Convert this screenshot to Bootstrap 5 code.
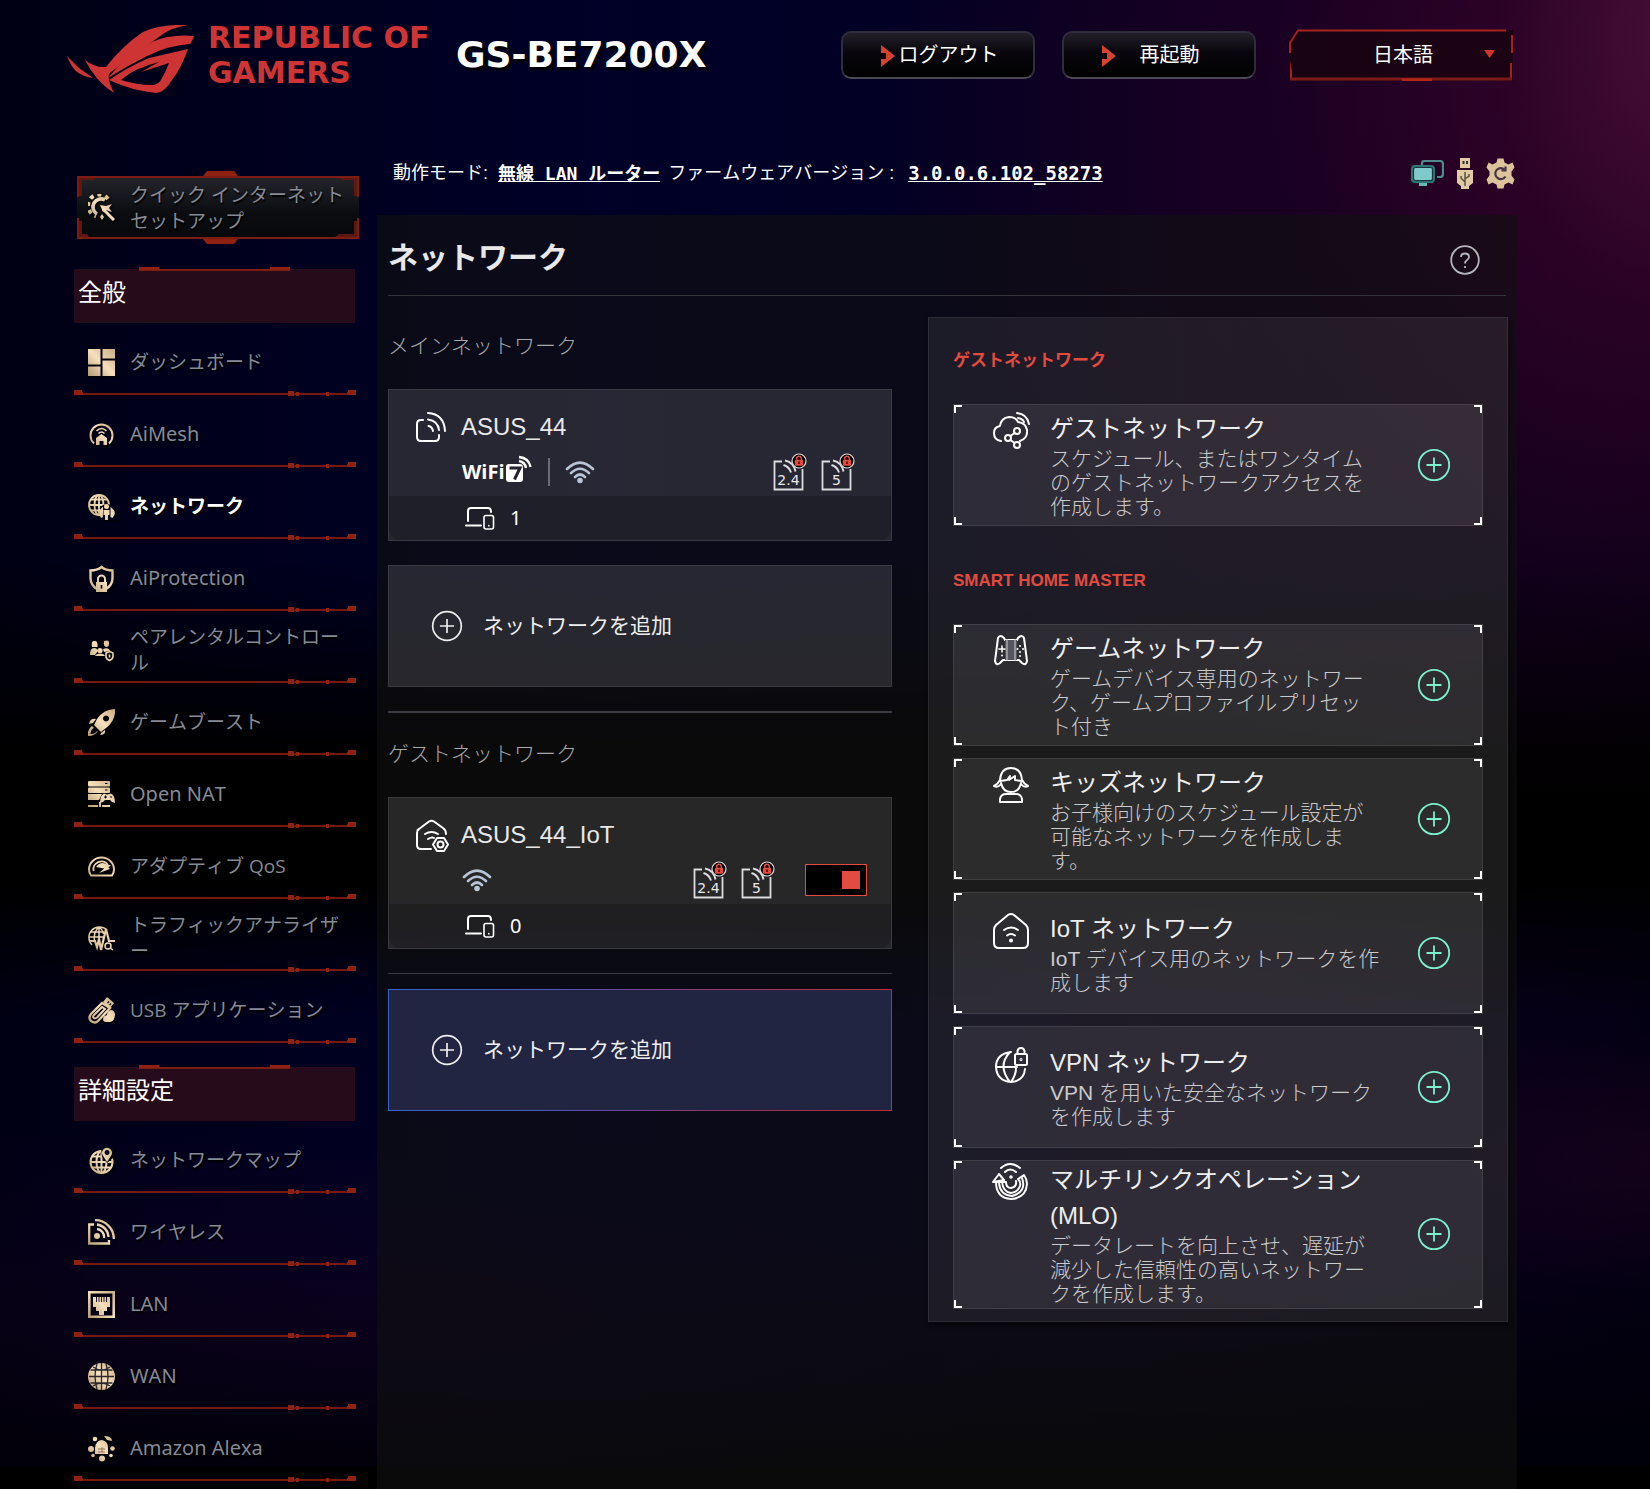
<!DOCTYPE html>
<html lang="ja" data-bs-theme="dark">
<head>
<meta charset="utf-8">
<meta name="viewport" content="width=device-width, initial-scale=1">
<title>GS-BE7200X - ネットワーク</title>
<link rel="stylesheet" href="https://cdn.jsdelivr.net/npm/bootstrap@5.3.0/dist/css/bootstrap.min.css">
<style>
:root{--rog:#cf3434;--accent:#e34a40;--side-line:#8f2113}
body{
  font-family:"Liberation Sans","Noto Sans CJK JP",sans-serif;color:#fff;min-height:100vh;overflow-x:hidden;font-kerning:none;text-spacing-trim:space-all;
  background:
    linear-gradient(180deg,transparent 1466px,#000 1467px),
    radial-gradient(ellipse 420px 620px at 102% 2%,rgba(76,16,58,.9),rgba(56,4,44,.5) 45%,transparent 100%),
    radial-gradient(ellipse 700px 700px at 96% 8%,rgba(46,0,40,.7),transparent 100%),
    radial-gradient(ellipse 360px 130px at 100% 78%,rgba(44,4,36,.4),transparent 100%),
    radial-gradient(ellipse 900px 200px at 22% 88%,rgba(20,2,30,.5),transparent 100%),
    linear-gradient(180deg,transparent 560px,#000 760px,#000 880px,transparent 1020px,transparent 1250px,#000008 1450px),
    linear-gradient(90deg,#000014 0,#00001e 250px,#000028 600px,#020024 900px,#0c0020 1200px,#040014 1650px);
}
.page-shell{padding:0 133px 0 67px}
.top-bar{height:110px;padding-right:4px}
.brand-name{font:700 30px/35px "DejaVu Sans",sans-serif;color:var(--rog);margin-left:14px;width:240px}
.model-name{font:700 36px/42px "DejaVu Sans",sans-serif;text-shadow:3px 3px 2px #000;margin-left:8px}
.top-btn{width:194px;height:48px;border:2px solid #2f2d3c;border-bottom-color:#4b4856;border-radius:10px;background:linear-gradient(#221f2a,#08060c 45%,#000);color:#fff;font-size:20px;padding:0 0 0 21px;position:relative}
.top-btn + .top-btn{margin-left:27px}
.top-btn:hover{color:#fff;border-color:#777}
.top-btn svg{position:absolute;left:37px;top:11px}
.lang-box{width:224px;height:52px;position:relative;margin-left:33px}
.lang-box svg{position:absolute;inset:0;pointer-events:none}
.lang-box select{appearance:none;width:100%;height:100%;border:0;background:#18040fcc;color:#fff;font-size:20px;text-align:center;padding-left:4px;clip-path:polygon(9px 1px,100% 1px,100% 100%,1px 100%,1px 14px)}
.side-col{width:304px;flex:none;padding:66px 0 0 7px;font-family:"Open Sans","Noto Sans CJK JP",sans-serif}
.quick-setup{margin:0 0 30px 3px;width:282px;height:63px;position:relative;background:linear-gradient(#25252b,#0a0c10 60%,#06080c)}
.quick-setup .frame{position:absolute;left:0;top:-5px;pointer-events:none}
.side-link{display:flex;align-items:center;color:#868a94;font-size:19px;line-height:26px;text-decoration:none;text-shadow:1px 2px 1px #000;gap:15px;word-break:break-all}
.side-link:hover,.side-link.active{color:#fff}
.side-link.active{font-weight:600}
.side-link.latin{font-size:20px;font-family:"Noto Sans",sans-serif}
.side-link svg{flex:none;filter:drop-shadow(1px 1px 1px #000)}
.quick-setup .side-link{height:63px;padding:0 4px 0 11px}
.side-head{width:281px;height:54px;background:#260b1a;font:24px/43px "Noto Sans CJK JP",sans-serif;padding-left:4px;margin:0;position:relative}
.side-head::before{content:"";position:absolute;left:65px;width:151px;top:-2px;height:4px;background:linear-gradient(var(--side-line),var(--side-line)) 0 0/20px 3px no-repeat,linear-gradient(var(--side-line),var(--side-line)) 100% 0/20px 3px no-repeat,linear-gradient(#7c1c12,#7c1c12) 0 2px/100% 2px no-repeat}
.side-item{width:282px;height:72px;position:relative;padding:8px 8px 0 14px}
.side-item .side-link{height:62px}
.side-item::after{content:"";position:absolute;left:0;bottom:-1px;width:100%;height:6px;
  background:
  linear-gradient(70deg,#8f2113 9px,transparent 9px) 0 0/12px 5px no-repeat,
  linear-gradient(-70deg,#8f2113 9px,transparent 9px) 100% 0/12px 5px no-repeat,
  linear-gradient(#8f2113,#8f2113) 214px 1px/6px 5px no-repeat,
  linear-gradient(#8f2113,#8f2113) 222px 2px/3px 4px no-repeat,
  linear-gradient(#8f2113,#8f2113) 252px 2px/3px 4px no-repeat,
  linear-gradient(#761710,#761710) 0 3px/100% 2px no-repeat}
.status-row{height:105px;padding:21px 2px 0 16px;font-size:18px}
.status-row a{color:#fff;font-weight:700;font-family:"DejaVu Sans Mono","Noto Sans CJK JP",monospace}
.status-row .op-mode{margin-left:10px}
.status-row .fw-ver{font-size:19px;margin-left:14px}
.status-icons{gap:12px}
.main-col{margin-left:6px}
.main-panel{background:rgba(17,17,17,.6);min-height:1274px;padding:0 11px 24px}
.panel-title{height:81px;border-bottom:1px solid #34333c;padding:5px 26px 0 0;margin:0 0 21px}
.panel-title h1{font-size:30px;font-weight:700;margin:0;color:#e8e8e8}
.net-columns{display:grid;grid-template-columns:504fr 580fr;gap:36px;margin-right:-2px;align-items:start}
.right-col{background:rgba(255,255,255,.07);border:1px solid rgba(255,255,255,.07);box-shadow:1px 4px 5px rgba(0,0,0,.45);padding:0 24px 12px}
.group-label{font-size:21px;font-weight:300;line-height:32px;color:#a8a8aa;margin:0;padding:25px 0 27px}
.group-label:first-child{padding-top:13px}
.net-card{background:rgba(255,255,255,.12);border:1px solid rgba(255,255,255,.09);border-radius:0;height:152px;color:#e8e8e8}
.net-name{font-size:24px;line-height:30px;padding:17px 24px 0 26px;gap:14px;height:57px}
.net-radio{height:49px;padding:0 24px 0 73px}
.net-foot{height:44px;background:rgba(0,0,0,.2);border-radius:0 0 10px 10px;font:20px/42px "Noto Sans",sans-serif;padding-left:76px;gap:15px;color:#fff}
.wifi-word{font:700 20px/28px "Open Sans",sans-serif;color:#fff;width:44px}
.band-set{gap:14px}
.v-sep{width:2px;height:28px;background:#6b6b75;margin:0 15px}
.add-btn{height:122px;width:100%;border:1px solid rgba(255,255,255,.09);border-radius:0;background:rgba(255,255,255,.12);color:#eee;font-size:21px;padding:0 0 0 42px;gap:20px}
.add-btn:hover{color:#fff;background:rgba(255,255,255,.18)}
.add-btn.chosen{background:#212542;border-image:linear-gradient(90deg,#3d61cc,#4a5abe 30%,#94376c 65%,#b83038) 1}
.rule{border:0;border-top:1px solid #3c3c44;opacity:1;margin:24px 0 15px}
.rule-thick{border-top-width:2px;margin-bottom:0}
.sq-switch{appearance:none;width:62px;height:32px;margin:0 0 0 30px;background:#000;border:1px solid var(--accent);position:relative}
.sq-switch::after{content:"";position:absolute;top:6px;left:6px;width:18px;height:18px;background:#666}
.sq-switch:checked::after{left:auto;right:6px;background:var(--accent)}
.kind-label{font-size:17px;font-weight:700;line-height:86px;color:var(--accent);margin:0}
.kind-btn{width:100%;min-height:122px;margin-bottom:12px;border:1px solid rgba(255,255,255,.09);border-radius:0;padding:1px 31px 2px 38px;color:#eee;
  background:linear-gradient(#fff,#fff) 0 0/8px 2px no-repeat,linear-gradient(#fff,#fff) 0 0/2px 8px no-repeat,
  linear-gradient(#fff,#fff) 100% 0/8px 2px no-repeat,linear-gradient(#fff,#fff) 100% 0/2px 8px no-repeat,
  linear-gradient(#fff,#fff) 0 100%/8px 2px no-repeat,linear-gradient(#fff,#fff) 0 100%/2px 8px no-repeat,
  linear-gradient(#fff,#fff) 100% 100%/8px 2px no-repeat,linear-gradient(#fff,#fff) 100% 100%/2px 8px no-repeat,rgba(255,255,255,.08)}
.kind-btn:last-child{margin-bottom:0}
.kind-btn:hover{color:#fff;border-color:#888}
.kind-icon{align-self:flex-start;margin-top:6px}
.kind-icon.low{margin-top:18px}
.kind-text{width:332px;margin-left:20px}
.kind-title{font-size:24px;line-height:36px;display:block}
.kind-desc{font-size:21px;line-height:24px;font-weight:300;color:#cac9cc;display:block}
.kind-plus{color:#7df0cd;margin-left:auto}
.ln{fill:none;stroke:#fff;stroke-width:2;stroke-linecap:round;stroke-linejoin:round}
.gs{fill:none;stroke:url(#gold);stroke-width:2}
.gf{fill:url(#gold)}
.cut{fill:#05061a}
</style>
<script src="https://cdn.jsdelivr.net/npm/bootstrap@5.3.0/dist/js/bootstrap.bundle.min.js"></script>
</head>
<body>
<svg width="0" height="0" class="position-absolute" aria-hidden="true">
  <defs>
    <linearGradient id="gold" gradientUnits="userSpaceOnUse" x1="0" y1="27" x2="27" y2="0"><stop offset="0" stop-color="#b39a72"/><stop offset=".5" stop-color="#f6dfbc"/><stop offset="1" stop-color="#c9ad80"/></linearGradient>
    <symbol id="plus" viewBox="0 0 34 34"><circle cx="17" cy="17" r="15.200" fill="none" stroke="currentColor" stroke-width="1.800"/><path d="M17 9.500v15M9.500 17h15" stroke="currentColor" stroke-width="1.800"/></symbol>
    <symbol id="wifi" viewBox="0 0 30 24"><g fill="none" stroke="#b9c4d6" stroke-width="2.600" stroke-linecap="round"><path d="M2 9Q15-4 28 9"/><path d="M6 13Q15 4.500 24 13"/><path d="M10 17Q15 12 20 17"/></g><circle cx="15" cy="20.500" r="2.800" fill="#b9c4d6"/></symbol>
    <symbol id="band" viewBox="0 0 34 38"><path d="M9 8.500H1.500V36.500H29.500V16" fill="none" stroke="#dcdce0" stroke-width="1.800"/><path d="M12 7.500q9 2 10.500 11M10.500 12q6 2 7.500 7.500" fill="none" stroke="#dcdce0" stroke-width="1.900"/><circle cx="26" cy="8" r="7" fill="#000" stroke="#ddd" stroke-width="1.200"/><path d="M23.700 7V5.500a2.300 2.300 0 0 1 4.600 0V7" fill="none" stroke="#e34a40" stroke-width="1.500"/><rect x="21.800" y="6.800" width="8.400" height="6" rx="1" fill="#e34a40"/><rect x="25.300" y="8.500" width="1.400" height="2.500" fill="#400"/></symbol>
    <symbol id="devices" viewBox="0 0 30 23"><path class="ln" d="M3 14V4q0-3 3-3h17q3 0 3 4M1 18.500h15"/><rect class="ln" style="stroke-width:1.600" x="19" y="8.500" width="9.500" height="13.500" rx="2"/><path class="ln" style="stroke-width:1.500" d="M23.800 18.500v.5"/></symbol>
  </defs>
</svg>

<div class="page-shell">
  <header class="top-bar d-flex align-items-center">
    <svg width="127" height="68" viewBox="0 0 127 68" fill="#cf3434" role="img" aria-label="ROG" class="mt-2"><path d="M0 31L12 43 26 53Q17 52 10 47 4 42 0 31Z"/><path d="M18 35Q28 43 39 42 56 20 76 7 92-1 121 0 104 3 96 9L44 47Q38 50 47 68 29 57 18 35Z"/><path d="M41 53Q60 29 85 17 103 9 127 11 126 15 123 19 103 20 80 31 60 41 41 53Z"/><path d="M42 55Q61 42 82 33L121 24Q114 44 105 55 97 68 89 68 66 66 42 55ZM54 55Q70 60 85 60 92 60 95 53 99 46 102 38L74 47 92 37Q67 43 54 55Z" fill-rule="evenodd"/></svg>
    <div class="brand-name">REPUBLIC OF<br>GAMERS</div>
    <div class="model-name">GS-BE7200X</div>
    <div class="d-flex align-items-center ms-auto">
      <button type="button" class="btn top-btn"><svg width="16" height="24" viewBox="0 0 16 24"><path d="M1 1L15 12 1 23V15H6V9H1Z" fill="#d6432f"/></svg>ログアウト</button>
      <button type="button" class="btn top-btn"><svg width="16" height="24" viewBox="0 0 16 24"><path d="M1 1L15 12 1 23V15H6V9H1Z" fill="#d6432f"/></svg>再起動</button>
      <div class="lang-box">
        <select aria-label="言語"><option>日本語</option><option>English</option></select>
        <svg width="224" height="52" viewBox="0 0 224 52" fill="none"><path d="M1 24V14L9 1.500H217M223 6V24M222 34V50M1 24" stroke="#a5231a" stroke-width="2"/><path d="M1 51V32L3 42V49H221V34H223V51Z" fill="#a5231a"/><path d="M1 50H223" stroke="#7d1a18" stroke-width="3"/><path d="M113 51H143" stroke="#b52818" stroke-width="3"/><path d="M195 21H206L200.500 29Z" fill="#d13428"/></svg>
      </div>
    </div>
  </header>

  <div class="d-flex">
    <aside class="side-col">
      <div class="quick-setup">
        <svg class="frame" width="282" height="73" viewBox="0 0 282 73"><path d="M1 26V6H281V26M1 47V67H281V47" fill="none" stroke="#7c1c12" stroke-width="2"/><path d="M126 5L130 0H157L161 5ZM126 68L130 73H157L161 68Z" fill="#8f2113"/><path d="M2 7H20L16 9H5V25H2ZM280 7H262L266 9H277V25H280ZM2 66H12L10 63H5V50H2ZM280 66H258L262 63H277V50H280Z" fill="#5d1812"/></svg>
        <a href="#" class="side-link"><svg width="27" height="27" viewBox="0 0 27 27"><path class="gs" style="stroke-width:3.600" d="M17 6A8 8 0 1 0 9 20"/><path class="gs" style="stroke-width:4" stroke-dasharray="4 4" d="M20 5A11 11 0 1 0 8 22"/><path class="gs" style="stroke-width:3" d="M15 15L26 26"/><path class="gf" d="M12 11l6 1 6-2-3 4 3 4-6-2-3 2zM14 20l2 3-2 3-2-3z"/></svg><span>クイック インターネットセットアップ</span></a>
      </div>

      <h2 class="side-head">全般</h2>
      <nav class="nav flex-column" aria-label="全般">
        <div class="side-item"><a href="#" class="side-link"><svg width="27" height="27" viewBox="0 0 27 27"><path class="gf" d="M0 0H12.500V15.500H0ZM14.500 0H27V9.500H14.500ZM0 17.500H12.500V27H0ZM14.500 11.500H27V27H14.500Z"/></svg><span>ダッシュボード</span></a></div>
        <div class="side-item"><a href="#" class="side-link latin"><svg width="27" height="27" viewBox="0 0 27 27"><path class="gs" d="M6 22.500A11 11 0 1 1 21 22.500"/><path class="gs" style="stroke-width:1.600" d="M8.500 10Q13.500 5 18.500 10M10.500 12.500Q13.500 9.500 16.500 12.500"/><path class="gf" fill-rule="evenodd" d="M8 24V17L13.500 13 19 17V24H15.500V20H11.500V24Z"/></svg><span>AiMesh</span></a></div>
        <div class="side-item"><a href="#" class="side-link active" aria-current="page"><svg width="27" height="27" viewBox="0 0 27 27"><g class="gs" style="stroke-width:1.800"><circle cx="11" cy="12" r="10"/><ellipse cx="11" cy="12" rx="4.500" ry="10"/><path d="M1 12H21M3 6.500H19M3 17.500H14M11 2V22"/></g><path class="cut" d="M12 14Q19 8 27 14V27H12Z"/><g class="gf"><circle cx="18.500" cy="13.500" r="2.500"/><path d="M15.500 17H21.500V22H20V27H17V22H15.500Z"/><path d="M14.500 14Q8.500 19 13 25L15 24V14ZM22.500 14Q30 19 24.500 25L22.500 24Z"/></g></svg><span>ネットワーク</span></a></div>
        <div class="side-item"><a href="#" class="side-link latin"><svg width="27" height="27" viewBox="0 0 27 27"><path class="gs" style="stroke-width:2.400" d="M9 24Q2.500 20 2.500 13V5.500Q9 5.500 13.500 2 18 5.500 24.500 5.500V13Q24.500 20 18 24"/><path class="gs" d="M10 17V14a3.500 3.500 0 0 1 7 0V17"/><path class="gf" fill-rule="evenodd" d="M8 17H19V27H8ZM12.700 20V23.500H14.300V20Z"/></svg><span>AiProtection</span></a></div>
        <div class="side-item"><a href="#" class="side-link"><svg width="27" height="27" viewBox="0 0 27 27"><g class="gf"><path d="M4 10Q3 3 6.500 4 10 3 9.500 10ZM16 4Q22 2 21 7 21 10 18 10 15 9 16 4ZM2 18Q2 11 6 11 9 11 10 14L7 18ZM15 12Q21 10 22 14L16 15Z"/><circle cx="12" cy="13.500" r="2.600"/><path d="M7 19Q8 16.500 12 16.500 16 16.500 17 19Z"/></g><path class="gs" style="stroke-width:1.600" d="M21.500 14.500L25 16V19.500Q25 22 21.500 23.500 18 22 18 19.500V16ZM21.500 17.500V20.500"/></svg><span>ペアレンタルコントロール</span></a></div>
        <div class="side-item"><a href="#" class="side-link"><svg width="27" height="27" viewBox="0 0 27 27"><path class="gf" fill-rule="evenodd" d="M27 0Q28 11 18 19L13 23 6 16 9 10Q16 0 27 0ZM18 6.500a3 3 0 1 0 .1 0Z"/><path class="gf" d="M8 10Q2 9 1 15L5 14ZM17 21Q18 26 12 26L13 24ZM4 17Q-1 20 0 27 7 27 10 22L8 23Q7 25 2.500 25 3 20 6 19Z"/></svg><span>ゲームブースト</span></a></div>
        <div class="side-item"><a href="#" class="side-link latin"><svg width="27" height="27" viewBox="0 0 27 27"><g class="gf"><rect y="0" width="22" height="5.500" rx="1"/><rect y="6.500" width="22" height="5.500" rx="1"/><path d="M0 13H14L11 19H0ZM0 24H10V26H0ZM11 21H13V26H11ZM14 24H22V26H14Z"/><path d="M12 22Q12 14 16 12.500L19 13.500 23 12.500Q27 14 27 22 24 22 22 19H17Q15 22 12 22Z"/></g><path d="M16 16H19M17.500 14.500V17.500M23 15V17" stroke="#05061a" stroke-width="1"/><path d="M17 2.500H19.500M17 9H19.500" stroke="#05061a"/></svg><span>Open NAT</span></a></div>
        <div class="side-item"><a href="#" class="side-link"><svg width="27" height="27" viewBox="0 0 27 27"><path class="gs" d="M3 22.500Q1 20 1 16.500A12.500 12 0 0 1 26 16.500Q26 20 24 22.500Z"/><path class="gs" d="M5.500 18A8 8 0 0 1 20 12"/><path class="gf" d="M8 14Q13 7 20 12L23 12 19 16ZM11 20L19 13 22 16Z"/></svg><span>アダプティブ QoS</span></a></div>
        <div class="side-item"><a href="#" class="side-link"><svg width="27" height="27" viewBox="0 0 27 27"><g class="gs" style="stroke-width:1.500"><path d="M4 20A10 10 0 1 1 19 5M1 12H15M3 7H16M11 2V17M11 2Q5 7 6.500 16M11 2Q15 5 15.500 9"/><circle cx="20" cy="21" r="3"/><path d="M22 23L25 25"/></g><path class="gs" style="stroke-width:2.200" d="M1 16H7L9 22 11 14 13 25 18 4 21 16H27"/></svg><span>トラフィックアナライザー</span></a></div>
        <div class="side-item"><a href="#" class="side-link"><svg width="27" height="27" viewBox="0 0 27 27"><path class="gf" d="M19 0L26 6 22 11 15 5Z"/><path class="gs" style="stroke-width:2.400" d="M14 6L3 17Q0 21 3 24 7 27 10 24L22 11Z"/><path class="gs" style="stroke-width:2" d="M14 10L6 18Q4 20 6 21 8 22 9.500 20L17 12Z"/><path class="gf" d="M15 22Q15 19 19 18 19 14 23 13 26 13 27 17 27 24 22 25H18Q15 25 15 22Z"/><path d="M19.500 6L21 4.500M21.500 8L23 6.500" stroke="#05061a" stroke-width="1.300"/></svg><span>USB アプリケーション</span></a></div>
      </nav>

      <h2 class="side-head mt-4">詳細設定</h2>
      <nav class="nav flex-column" aria-label="詳細設定">
        <div class="side-item"><a href="#" class="side-link"><svg width="27" height="27" viewBox="0 0 27 27"><g class="gs"><circle cx="13.500" cy="15" r="11"/><ellipse cx="13.500" cy="15" rx="5" ry="11"/><path d="M2.500 15H24.500M4 9.500H17M4 20.500H23M13.500 4V26"/></g><path class="cut" d="M13 0H26V10L19 16 14 10Z"/><path class="gf" fill-rule="evenodd" d="M19 15L14.500 8A5 5 0 1 1 23.500 8ZM19 3a2.500 2.500 0 1 0 .1 0Z"/></svg><span>ネットワークマップ</span></a></div>
        <div class="side-item"><a href="#" class="side-link"><svg width="27" height="27" viewBox="0 0 27 27"><g class="gs" style="stroke-width:2.300"><path d="M6 5.500H1.200V24.500H21V21M7 1.200A18.500 18.500 0 0 1 25.800 20M9 5.500A13 13 0 0 1 20.500 18M9 10A8 8 0 0 1 16 19"/></g><circle class="gf" cx="9" cy="17" r="3"/></svg><span>ワイヤレス</span></a></div>
        <div class="side-item"><a href="#" class="side-link latin"><svg width="27" height="27" viewBox="0 0 27 27"><path class="gs" style="stroke-width:2.600" d="M1.300 1.300H25.700V25.700H1.300Z"/><path class="gf" d="M5 6H22V16H19V20H16V24H11V20H8V16H5Z"/><path d="M8.500 6V11M11 6V11M13.500 6V11M16 6V11M18.500 6V11" stroke="#05061a" stroke-width=".9"/></svg><span>LAN</span></a></div>
        <div class="side-item"><a href="#" class="side-link latin"><svg width="27" height="27" viewBox="0 0 27 27"><circle class="gf" cx="13.500" cy="13.500" r="13.500"/><g fill="none" stroke="#2a2730" stroke-width="1.300"><path d="M5 4Q13.500 10 22 4M5 23Q13.500 17 22 23M1 13.500H26M9 1Q5 13 9 26M18 1Q22 13 18 26M13.500 0V27M2.500 7H24.500M2.500 20H24.500"/></g></svg><span>WAN</span></a></div>
        <div class="side-item"><a href="#" class="side-link latin"><svg width="27" height="27" viewBox="0 0 27 27"><g class="gf"><path d="M7 19V13Q8 5 14 5 20 6 20 13V19Z"/><circle cx="3" cy="14" r="3"/><circle cx="7" cy="4" r="2.300"/><circle cx="24.500" cy="13.500" r="2.300"/><circle cx="14" cy="23.500" r="3"/><circle cx="5" cy="20.500" r="1.800"/><circle cx="23" cy="20.500" r="1.800"/><path d="M16 1Q24 1 24 6L19 5Z"/></g><path d="M10 14H17M10 17H17M14 12V17" stroke="#8a7350" stroke-width="1"/></svg><span>Amazon Alexa</span></a></div>
      </nav>
    </aside>

    <main class="flex-fill main-col">
      <div class="status-row d-flex align-items-center">
        <span>動作モード:</span><a href="#" class="op-mode">無線 LAN ルーター</a>
        <span class="ms-2">ファームウェアバージョン :</span><a href="#" class="fw-ver">3.0.0.6.102_58273</a>
        <span class="status-icons d-flex align-items-center ms-auto">
          <svg width="33" height="27" viewBox="0 0 33 27"><path d="M11 5V3Q11 1 14 1H29Q32 1 32 4V14Q32 17 29 17H26" fill="none" stroke="#4f8c90" stroke-width="2.200"/><path d="M4 5H20Q24 5 24 9V19Q24 23 20 23H4Q0 23 0 19V9Q0 5 4 5Z" fill="#2f7478"/><rect x="2.500" y="7.500" width="19" height="13" rx="2" fill="#7fcbcb" stroke="#16363c" stroke-width="1.200"/><path d="M8 23H16V26H8Z" fill="#69b9b9"/></svg>
          <svg width="18" height="31" viewBox="0 0 18 31" fill="#e3caa4"><path d="M4 0H14V10H4ZM1 12H17V25L13 28V31H5V28L1 25Z"/><path d="M6.500 3H8.500V6H6.500ZM10 3H12V6H10Z" fill="#333"/><path d="M9 14V28M9 24L5 20V18M9 21L13 18V16" stroke="#554" stroke-width="1.500" fill="none"/></svg>
          <svg width="29" height="31" viewBox="-14.500 -15.500 29 31"><path fill="#dcc39b" d="M-3-15H3L4-11 8-9 12-11 14-6 11-2V2L14 6 12 11 8 9 4 11 3 15H-3L-4 11-8 9-12 11-14 6-11 2V-2L-14-6-12-11-8-9-4-11Z"/><path d="M4-4A5.500 5.500 0 1 0 5 3M5-7V-3H1" fill="none" stroke="#463646" stroke-width="2.200"/></svg>
        </span>
      </div>

      <section class="main-panel">
        <div class="panel-title d-flex align-items-center justify-content-between">
          <h1>ネットワーク</h1>
          <a href="#" aria-label="ヘルプ" class="d-flex mt-1"><svg width="30" height="30" viewBox="0 0 30 30" fill="none" stroke="#b4b4be" stroke-width="1.800"><circle cx="15" cy="15" r="13.800"/><path d="M11 12Q11 8.500 15 8.500T19 12Q19 14 16.500 15.500 15 16.500 15 18.500M15 21V23"/></svg></a>
        </div>

        <div class="net-columns">
          <div class="left-col">
            <p class="group-label">メインネットワーク</p>
            <div class="card net-card">
              <div class="net-name d-flex align-items-center">
                <svg width="32" height="32" viewBox="0 0 32 32" class="ln"><path d="M8 9H6Q2 9 2 13V26Q2 30 6 30H20Q24 30 24 26V24M13 2Q29 3 30 20M13 8.500Q23 10 24 19M13.500 15Q17 15.500 18 20"/></svg>
                <span>ASUS_44</span>
              </div>
              <div class="net-radio d-flex align-items-center">
                <span class="wifi-word">WiFi</span>
                <svg class="mb-1" width="27" height="30" viewBox="45 0 27 30" role="img" aria-label="7"><rect x="45" y="9" width="17" height="18" rx="3" fill="#fff"/><path d="M48.500 13H59L53.500 24.500" fill="none" stroke="#24232e" stroke-width="3"/><path d="M58 6Q64 7 65 13M58 2Q68 3 69.500 12" fill="none" stroke="#fff" stroke-width="2.400"/></svg>
                <span class="v-sep"></span>
                <svg width="30" height="24"><use href="#wifi"/></svg>
                <span class="band-set d-flex ms-auto me-2 pe-1">
                  <svg width="34" height="38"><use href="#band"/><text x="15.500" y="32" text-anchor="middle" font-family="DejaVu Sans" font-size="14" fill="#e8e8ea">2.4</text></svg>
                  <svg width="34" height="38"><use href="#band"/><text x="15.500" y="32" text-anchor="middle" font-family="DejaVu Sans" font-size="14" fill="#e8e8ea">5</text></svg>
                </span>
              </div>
              <div class="net-foot d-flex align-items-center"><svg width="30" height="23"><use href="#devices"/></svg>1</div>
            </div>

            <button type="button" class="btn add-btn d-flex align-items-center mt-4"><svg width="32" height="32"><use href="#plus"/></svg>ネットワークを追加</button>
            <hr class="rule rule-thick">
            <p class="group-label">ゲストネットワーク</p>

            <div class="card net-card">
              <div class="net-name d-flex align-items-center">
                <svg width="32" height="32" viewBox="0 0 32 32" class="ln overflow-visible"><path d="M16 30H6Q2 30 2 26V14Q2 11 4 10L14 2.500Q16.500 1 19 2.500L28 9Q31 11 31 15M10 15Q16.500 11 23 15M13 20Q17 17.500 19 19"/><path d="M22 19H29L33 25.500 29 32H22L18 25.500Z"/><circle cx="25.500" cy="25.500" r="3"/></svg>
                <span>ASUS_44_IoT</span>
              </div>
              <div class="net-radio d-flex align-items-center">
                <svg width="30" height="24"><use href="#wifi"/></svg>
                <span class="band-set d-flex ms-auto">
                  <svg width="34" height="38"><use href="#band"/><text x="15.500" y="32" text-anchor="middle" font-family="DejaVu Sans" font-size="14" fill="#e8e8ea">2.4</text></svg>
                  <svg width="34" height="38"><use href="#band"/><text x="15.500" y="32" text-anchor="middle" font-family="DejaVu Sans" font-size="14" fill="#e8e8ea">5</text></svg>
                </span>
                <input type="checkbox" role="switch" class="sq-switch" aria-label="ASUS_44_IoT" checked>
              </div>
              <div class="net-foot d-flex align-items-center"><svg width="30" height="23"><use href="#devices"/></svg>0</div>
            </div>
            <hr class="rule">
            <button type="button" class="btn add-btn chosen d-flex align-items-center"><svg width="32" height="32"><use href="#plus"/></svg>ネットワークを追加</button>
          </div>

          <div class="right-col">
            <h3 class="kind-label">ゲストネットワーク</h3>
            <button type="button" class="btn kind-btn d-flex align-items-center text-start">
              <svg class="ln kind-icon" width="38" height="38" viewBox="0 0 38 38"><path d="M9 29Q2 28 2 21 2 15 8 14 9 6 17 5 24 5 26 10 34 11 35 18 36 26 28 29M25 1Q35 2 37 12M26 6Q31 7 32 10"/><circle cx="25" cy="19" r="3"/><circle cx="16" cy="26" r="3"/><circle cx="25" cy="33" r="3"/><path d="M18.500 24L22.500 21M18.500 28L22.500 31"/></svg>
              <span class="kind-text"><span class="kind-title">ゲストネットワーク</span><span class="kind-desc">スケジュール、またはワンタイムのゲストネットワークアクセスを作成します。</span></span>
              <svg class="kind-plus" width="34" height="34"><use href="#plus"/></svg>
            </button>

            <h3 class="kind-label">SMART HOME MASTER</h3>
            <button type="button" class="btn kind-btn d-flex align-items-center text-start">
              <svg class="ln kind-icon" width="38" height="38" viewBox="0 0 38 38"><path d="M6 6Q8 2 12 6L13 8H25L26 6Q30 2 32 6L35 29Q34 34 30 31L27 28H11L8 31Q4 34 3 29Z"/><path d="M13 8H25V28H13Z" fill="#555560" stroke="none"/><path d="M15 8V28M23 8V28" stroke="#aaa" stroke-width="1.500"/><path d="M10 14V20M7 17H13" stroke-width="1.500"/><g fill="#fff" stroke="none"><circle cx="28" cy="14" r="1"/><circle cx="28" cy="20" r="1"/><circle cx="25.500" cy="17" r="1"/><circle cx="31" cy="17" r="1"/><circle cx="10" cy="23.500" r="1"/><circle cx="28" cy="24" r="1"/></g></svg>
              <span class="kind-text"><span class="kind-title">ゲームネットワーク</span><span class="kind-desc">ゲームデバイス専用のネットワーク、ゲームプロファイルプリセット付き</span></span>
              <svg class="kind-plus" width="34" height="34"><use href="#plus"/></svg>
            </button>
            <button type="button" class="btn kind-btn d-flex align-items-center text-start">
              <svg class="ln kind-icon" width="38" height="38" viewBox="0 0 38 38"><path d="M8 14Q9 2 19 2T30 14M8 14Q6 18 2 20 6 22 9 18M30 14Q32 18 36 20 32 22 29 18M8 15L15 14 18 10 17 14 23 10 23 14 30 15M9 17Q11 26 19 26T29 17M8 36V33Q9 28 14 28H24Q29 28 30 33V36Z"/></svg>
              <span class="kind-text"><span class="kind-title">キッズネットワーク</span><span class="kind-desc">お子様向けのスケジュール設定が可能なネットワークを作成します。</span></span>
              <svg class="kind-plus" width="34" height="34"><use href="#plus"/></svg>
            </button>
            <button type="button" class="btn kind-btn d-flex align-items-center text-start">
              <svg class="ln kind-icon low" width="38" height="38" viewBox="0 0 38 38"><path d="M2 18Q2 15 4 13L16 3Q19 1 22 3L34 13Q36 15 36 18V31Q36 36 31 36H7Q2 36 2 31ZM12 18Q19 13 26 18M15 23.500Q19 20.500 23 23.500"/><circle cx="19" cy="28.500" r="1" fill="#fff"/></svg>
              <span class="kind-text"><span class="kind-title">IoT ネットワーク</span><span class="kind-desc">IoT デバイス用のネットワークを作成します</span></span>
              <svg class="kind-plus" width="34" height="34"><use href="#plus"/></svg>
            </button>
            <button type="button" class="btn kind-btn d-flex align-items-center text-start">
              <svg class="ln kind-icon low" width="38" height="38" viewBox="0 0 38 38"><path d="M19 6Q4 8 4 21 5 35 19 36 32 35 33 23M4 21H25M18 6Q5 20 18 36M24 22Q24 29 19 36"/><rect x="23" y="8" width="12" height="11" rx="1.500"/><path d="M25.500 8V5Q26 2 29 2T32.500 5V8"/><circle cx="29" cy="13.500" r=".5"/></svg>
              <span class="kind-text"><span class="kind-title">VPN ネットワーク</span><span class="kind-desc">VPN を用いた安全なネットワークを作成します</span></span>
              <svg class="kind-plus" width="34" height="34"><use href="#plus"/></svg>
            </button>
            <button type="button" class="btn kind-btn d-flex align-items-center text-start">
              <svg class="ln kind-icon mt-0" width="38" height="38" viewBox="0 0 38 38"><path d="M9 6Q18-2 28 6M13 10Q18 5 24 10M1 20L7 12 12 18ZM4 20Q4 36 19 37 34 36 35 22 35 17 32 13L26 17Q29 20 28 24 26 30 19 31 11 30 10 20M30 16Q35 30 20 34 8 33 7 21M14 20Q14 26 19 26 25 25 24 19M1 20H14"/><circle cx="19" cy="15" r=".8" fill="#fff"/></svg>
              <span class="kind-text"><span class="kind-title">マルチリンクオペレーション (MLO)</span><span class="kind-desc">データレートを向上させ、遅延が減少した信頼性の高いネットワークを作成します。</span></span>
              <svg class="kind-plus" width="34" height="34"><use href="#plus"/></svg>
            </button>
          </div>
        </div>
      </section>
    </main>
  </div>
</div>
</body>
</html>
